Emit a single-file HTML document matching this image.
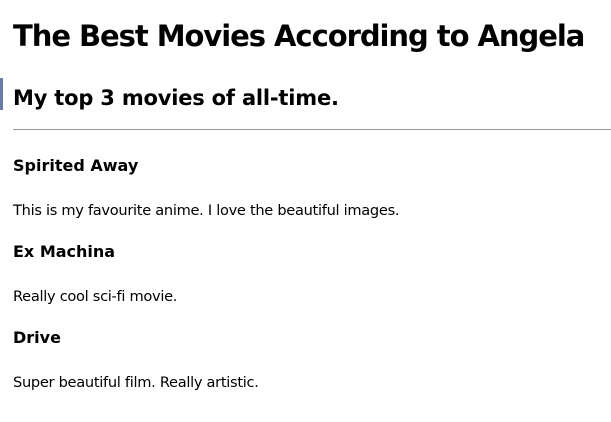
<!DOCTYPE html>
<html><head><style>
body{margin:0;width:611px;height:422px;background:#fff;font-family:"DejaVu Sans","Liberation Sans",sans-serif;color:#000;position:relative;overflow:hidden}
.a{position:absolute;left:13px;white-space:nowrap;margin:0}
h1{font-size:29px;font-weight:bold;top:19px;letter-spacing:-1.05px}
h2{font-size:21px;font-weight:bold;top:86px;letter-spacing:-0.2px}
h3{font-size:16px;font-weight:bold}
p{font-size:14.6px;letter-spacing:-0.3px}
.bar{position:absolute;left:0;top:78px;width:3px;height:32px;background:#6b7ba8}
.hr{position:absolute;left:13px;right:0;top:129px;height:1px;background:#999}
</style></head><body>
<h1 class="a">The Best Movies According to Angela</h1>
<div class="bar"></div>
<h2 class="a">My top 3 movies of all-time.</h2>
<div class="hr"></div>
<h3 class="a" style="top:156px">Spirited Away</h3>
<p class="a" style="top:202px">This is my favourite anime. I love the beautiful images.</p>
<h3 class="a" style="top:242px">Ex Machina</h3>
<p class="a" style="top:288px">Really cool sci-fi movie.</p>
<h3 class="a" style="top:328px">Drive</h3>
<p class="a" style="top:374px">Super beautiful film. Really artistic.</p>
</body></html>
